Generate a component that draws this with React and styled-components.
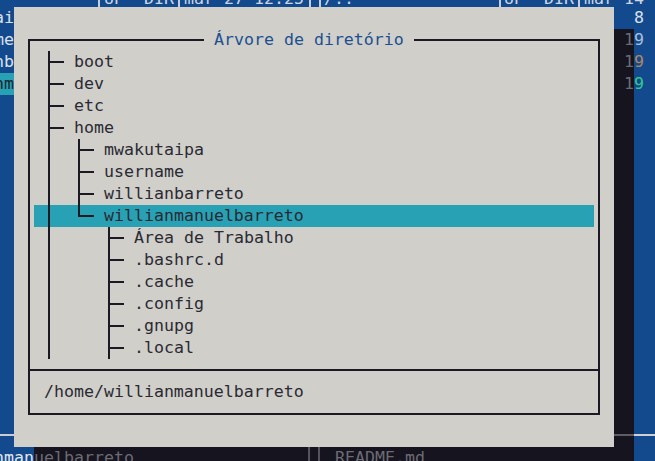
import React from 'react'
import styled, { createGlobalStyle } from 'styled-components'

const BLUE = '#134a8d'
const SHADE = '#15141f'
const PANEL = '#d0cfca'
const INK = '#2b2a33'
const LINE = '#1b1a24'
const CYAN = '#27a1b3'
const LIGHT = '#dbe0ec'
const DIM = '#6c6b73'

const GlobalStyle = createGlobalStyle`
  html, body {
    margin: 0;
    padding: 0;
    background: ${SHADE};
  }
  body {
    font-family: "DejaVu Sans Mono", "Liberation Mono", monospace;
    font-size: 16.6px;
  }
`

const Screen = styled.div`
  width: 655px;
  height: 461px;
  overflow: hidden;
  display: flex;
  flex-direction: column;
  background: ${SHADE};
  line-height: 22px;
  white-space: pre;
`

const TopBar = styled.div`
  height: 7px;
  flex: none;
  overflow: hidden;
  background: ${BLUE};
`

const TopLine = styled.div`
  display: flex;
  height: 22px;
  margin-top: -12px;
  color: #cdd5e5;
`

const TopSeg = styled.div`
  width: ${p => p.$w}px;
  flex: none;
  box-sizing: border-box;
  padding-left: ${p => p.$pad || 0}px;
  border-left: ${p => (p.$bar ? '2px solid #c6cedd' : 'none')};
  overflow: hidden;
`

const Middle = styled.div`
  display: flex;
  height: 440px;
  flex: none;
`

const Strip = styled.div`
  width: ${p => p.$w}px;
  flex: none;
  display: flex;
  flex-direction: column;
`

const StripRow = styled.div`
  height: ${p => (p.$fill ? 'auto' : '22px')};
  flex: ${p => (p.$fill ? '1' : 'none')};
  display: flex;
`

const Cell = styled.div`
  width: ${p => p.$w}px;
  flex: none;
  display: flex;
  justify-content: ${p => (p.$start ? 'flex-start' : 'flex-end')};
  overflow: hidden;
  color: ${p => p.$fg || LIGHT};
  background: ${p => p.$bg || BLUE};
`

const RuleCell = styled(Cell)`
  background: linear-gradient(
    to bottom,
    transparent 9px,
    ${p => p.$rule} 9px,
    ${p => p.$rule} 11px,
    transparent 11px
  ), ${p => p.$bg || BLUE};
`

const Dialog = styled.section`
  width: 600px;
  height: 440px;
  flex: none;
  box-sizing: border-box;
  padding: 32px 14px;
  display: flex;
  background: ${PANEL};
  color: ${INK};
`

const Frame = styled.div`
  position: relative;
  flex: 1;
  display: flex;
  flex-direction: column;
  border: 2px solid ${LINE};
`

const FrameTitle = styled.h2`
  position: absolute;
  top: -12px;
  left: 174px;
  margin: 0;
  padding: 0 10px;
  font: inherit;
  line-height: 22px;
  color: #1e4f91;
  background: ${PANEL};
`

const Tree = styled.div`
  flex: 1;
  padding: 10px 4px;
  display: flex;
  flex-direction: column;
`

const Row = styled.div`
  display: flex;
  height: 22px;
  flex: none;
  padding-left: 10px;
  background: ${p => (p.$selected ? CYAN : 'transparent')};
`

const Guide = styled.span`
  position: relative;
  width: ${p => (p.$kind === 'gap' ? 20 : 10)}px;
  flex: none;

  &::before {
    content: '';
    position: absolute;
    top: 0;
    left: 4px;
    width: 2px;
    background: ${LINE};
    height: ${p =>
      p.$kind === 'elbow' ? '12px' : p.$kind === 'pipe' || p.$kind === 'tee' ? '22px' : '0'};
  }

  &::after {
    content: '';
    position: absolute;
    top: 10px;
    height: 2px;
    right: 0;
    left: ${p => (p.$kind === 'dash' ? '0' : '4px')};
    background: ${LINE};
    display: ${p => (['tee', 'elbow', 'dash'].includes(p.$kind) ? 'block' : 'none')};
  }
`

const Name = styled.span`
  margin-left: 10px;
`

const PathBar = styled.div`
  height: 22px;
  padding: 10px 14px;
  border-top: 2px solid ${LINE};
`

const BottomBar = styled.div`
  display: flex;
  height: 14px;
  flex: none;
  overflow: hidden;
`

const ShadeSeg = styled.div`
  width: ${p => p.$w}px;
  flex: none;
  box-sizing: border-box;
  padding-left: ${p => p.$pad || 0}px;
  border-left: ${p => (p.$bar ? `2px solid #55545c` : 'none')};
  color: ${DIM};
  background: ${SHADE};
  overflow: hidden;
`

const tree = [
  { name: 'boot', trail: [], last: false },
  { name: 'dev', trail: [], last: false },
  { name: 'etc', trail: [], last: false },
  { name: 'home', trail: [], last: false },
  { name: 'mwakutaipa', trail: [true], last: false },
  { name: 'username', trail: [true], last: false },
  { name: 'willianbarreto', trail: [true], last: false },
  { name: 'willianmanuelbarreto', trail: [true], last: true, selected: true },
  { name: 'Área de Trabalho', trail: [true, false], last: false },
  { name: '.bashrc.d', trail: [true, false], last: false },
  { name: '.cache', trail: [true, false], last: false },
  { name: '.config', trail: [true, false], last: false },
  { name: '.gnupg', trail: [true, false], last: false },
  { name: '.local', trail: [true, false], last: false },
]

const leftItems = [
  { text: 'ai' },
  { text: 'me' },
  { text: 'nb' },
  { text: 'nm', on: true },
]

const sizes = [
  { color: '#a9bedb' },
  { color: '#ad8660' },
  { color: '#33c98d' },
]

const TreeRow = ({ item }) => (
  <Row $selected={item.selected}>
    {item.trail.map((more, i) => (
      <React.Fragment key={i}>
        <Guide $kind={more ? 'pipe' : 'blank'} />
        <Guide $kind="gap" />
      </React.Fragment>
    ))}
    <Guide $kind={item.last ? 'elbow' : 'tee'} />
    <Guide $kind="dash" />
    <Name>{item.name}</Name>
  </Row>
)

export default function App() {
  return (
    <>
      <GlobalStyle />
      <Screen>
        <TopBar>
          <TopLine>
            <TopSeg $w={98} />
            <TopSeg $w={80} $bar $pad={4}>UP  DIR</TopSeg>
            <TopSeg $w={131} $bar $pad={4}>mar 27 12:25</TopSeg>
            <TopSeg $w={10} $bar />
            <TopSeg $w={180} $bar $pad={3}>/..</TopSeg>
            <TopSeg $w={79} $bar $pad={3}>UP  DIR</TopSeg>
            <TopSeg $w={77} $bar $pad={4}>mar 14</TopSeg>
          </TopLine>
        </TopBar>

        <Middle>
          <Strip $w={14}>
            {leftItems.map(it => (
              <StripRow key={it.text}>
                <Cell $w={14} $bg={it.on ? CYAN : BLUE} $fg={it.on ? '#1b2533' : LIGHT}>
                  {it.text}
                </Cell>
              </StripRow>
            ))}
            <StripRow $fill>
              <Cell $w={14} />
            </StripRow>
            <StripRow>
              <RuleCell $w={14} $rule="#c9ccd6" />
            </StripRow>
          </Strip>

          <Dialog>
            <Frame>
              <FrameTitle>Árvore de diretório</FrameTitle>
              <Tree>
                {tree.map(item => (
                  <TreeRow key={item.name} item={item} />
                ))}
              </Tree>
              <PathBar>/home/willianmanuelbarreto</PathBar>
            </Frame>
          </Dialog>

          <Strip $w={41}>
            <StripRow>
              <Cell $w={20} />
              <Cell $w={21} $start>8</Cell>
            </StripRow>
            {sizes.map((s, i) => (
              <StripRow key={i}>
                <Cell $w={20} $bg={SHADE} $fg={DIM}>1</Cell>
                <Cell $w={21} $start $fg={s.color}>9</Cell>
              </StripRow>
            ))}
            <StripRow $fill>
              <Cell $w={20} $bg={SHADE} />
              <Cell $w={21} />
            </StripRow>
            <StripRow>
              <RuleCell $w={20} $bg={SHADE} $rule="#5e5d66" />
              <RuleCell $w={21} $rule="#cfd0d6" />
            </StripRow>
          </Strip>
        </Middle>

        <BottomBar>
          <Cell $w={34} $fg="#e2e6f0">nman</Cell>
          <ShadeSeg $w={274}>uelbarreto</ShadeSeg>
          <ShadeSeg $w={10} $bar />
          <ShadeSeg $w={316} $bar $pad={15}>README.md</ShadeSeg>
          <Cell $w={21} />
        </BottomBar>
      </Screen>
    </>
  )
}
